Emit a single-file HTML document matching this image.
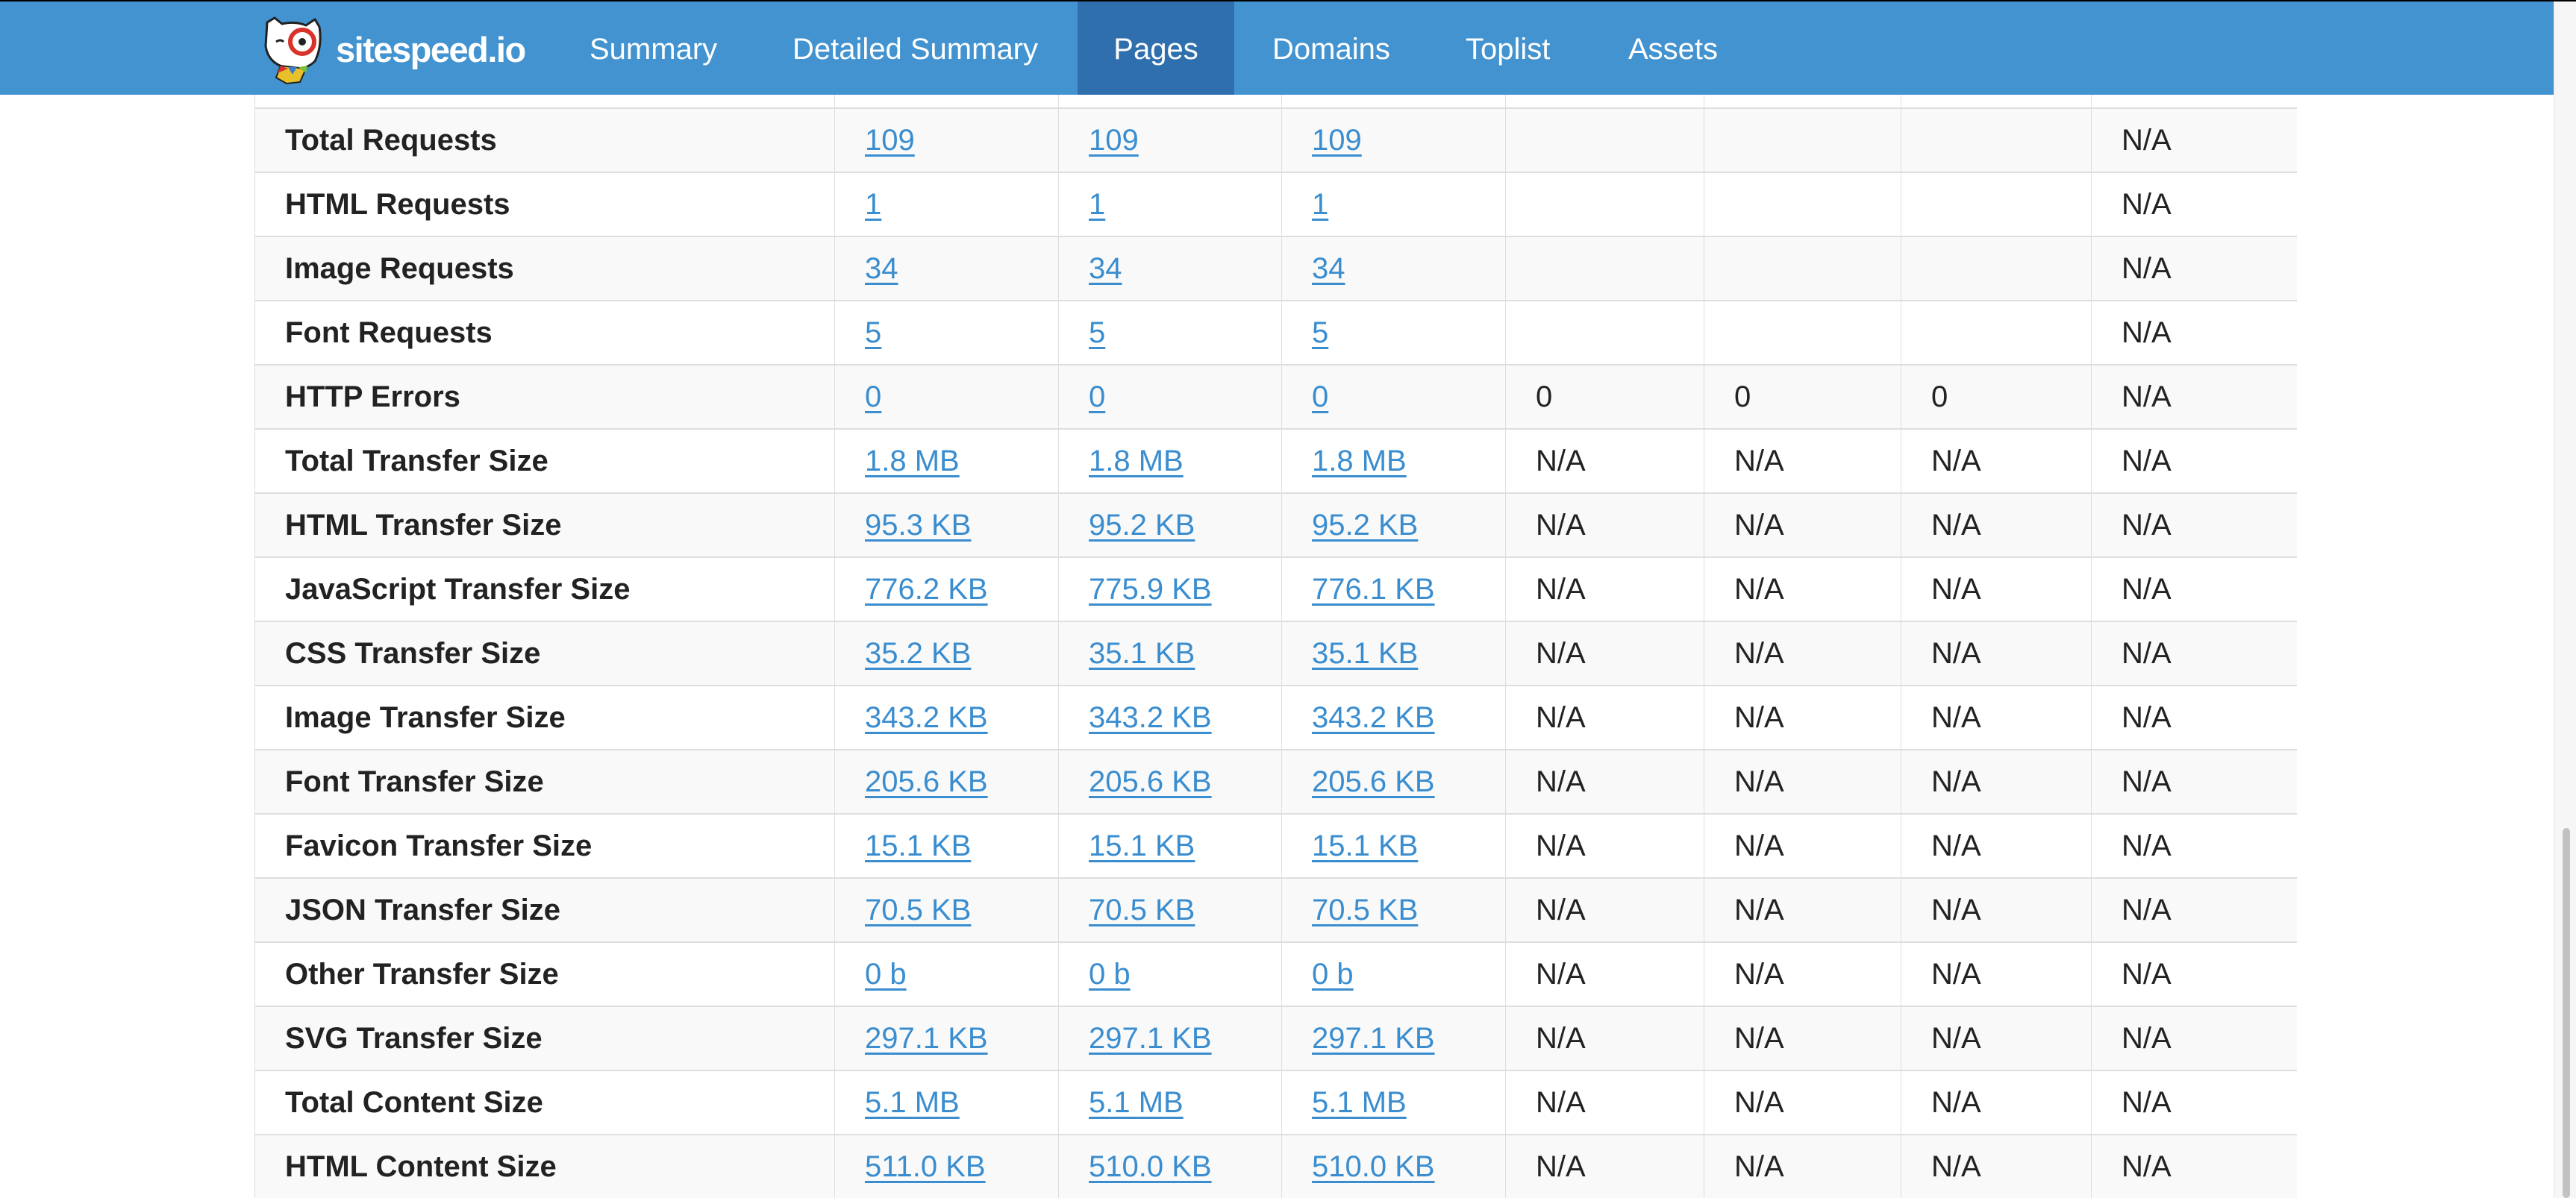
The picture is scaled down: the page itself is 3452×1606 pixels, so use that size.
<!DOCTYPE html>
<html><head><meta charset="utf-8"><style>
html,body{margin:0;padding:0;width:3452px;height:1606px;overflow:hidden;background:#fff;font-family:"Liberation Sans",Helvetica,Arial,sans-serif}
.top{position:absolute;left:0;top:0;width:3452px;height:2px;background:#000}
.hdr{position:absolute;left:0;top:2px;width:3422px;height:125px;background:#4293cf}
.nav{position:absolute;top:2px;height:125px;line-height:125px;color:#fff;font-size:40px}
.act{background:#2f6fad;top:0}
.sb{position:absolute;left:3422px;top:2px;width:30px;height:1604px;background:#f6f6f6;border-left:1px solid #e4e4e4}
.thumb{position:absolute;left:3434px;top:1110px;width:10px;height:496px;background:#c2c2c2;border-radius:5px}
.wrap{position:absolute;left:341px;top:127px;width:2737px;height:1479px;overflow:hidden}
table{border-collapse:collapse;margin-top:-69px;table-layout:fixed;width:2737px}
td{height:84px;border-top:2px solid #dedede;border-left:1px solid #dedede;border-right:1px solid #dedede;padding:0 0 0 40px;font-size:40px;color:#222;vertical-align:middle;white-space:nowrap}
td:first-child{font-weight:bold}
tr:nth-child(even) td{background:#f9f9f9}
a{color:#3a8dcf;text-decoration:underline;text-decoration-thickness:3px;text-underline-offset:6px}
</style></head><body>
<div class="top"></div>
<div class="hdr">
<svg style="position:absolute;left:350px;top:20px" width="90" height="92" viewBox="0 0 90 92">
<path d="M8 8 L18 2 L28 10 Q45 6 60 12 L72 4 L78 14 Q82 40 72 60 Q60 72 40 70 Q10 66 6 40 Z" fill="#fff" stroke="#222" stroke-width="3"/>
<circle cx="55" cy="34" r="16" fill="#fff" stroke="#d9322b" stroke-width="6"/>
<circle cx="55" cy="34" r="5" fill="#222"/>
<path d="M20 34 Q26 30 30 34" stroke="#222" stroke-width="3" fill="none"/>
<path d="M26 66 L20 82 L34 90 L52 88 L60 70 Z" fill="#e8c12a" stroke="#222" stroke-width="2"/>
<path d="M26 66 L22 76 L36 70 Z" fill="#d9322b"/>
<path d="M50 68 L60 76 L62 66 Z" fill="#7bbf3b"/>
<path d="M36 68 L48 68 L42 78 Z" fill="#3b7bd1"/>
</svg>
<div class="nav" style="left:450px;font-weight:bold;font-size:47px;letter-spacing:-1.5px">sitespeed.io</div>
<div class="nav" style="left:790px">Summary</div>
<div class="nav" style="left:1062px">Detailed Summary</div>
<div class="nav act" style="left:1444px;width:210px;text-align:center;line-height:129px">Pages</div>
<div class="nav" style="left:1705px">Domains</div>
<div class="nav" style="left:1964px">Toplist</div>
<div class="nav" style="left:2182px">Assets</div>
</div>
<div class="wrap"><table>
<colgroup><col style="width:777px"><col style="width:300px"><col style="width:299px"><col style="width:300px"><col style="width:266px"><col style="width:264px"><col style="width:255px"><col style="width:276px"></colgroup>
<tr><td></td><td></td><td></td><td></td><td></td><td></td><td></td><td></td></tr>
<tr><td>Total Requests</td><td><a>109</a></td><td><a>109</a></td><td><a>109</a></td><td></td><td></td><td></td><td>N/A</td></tr>
<tr><td>HTML Requests</td><td><a>1</a></td><td><a>1</a></td><td><a>1</a></td><td></td><td></td><td></td><td>N/A</td></tr>
<tr><td>Image Requests</td><td><a>34</a></td><td><a>34</a></td><td><a>34</a></td><td></td><td></td><td></td><td>N/A</td></tr>
<tr><td>Font Requests</td><td><a>5</a></td><td><a>5</a></td><td><a>5</a></td><td></td><td></td><td></td><td>N/A</td></tr>
<tr><td>HTTP Errors</td><td><a>0</a></td><td><a>0</a></td><td><a>0</a></td><td>0</td><td>0</td><td>0</td><td>N/A</td></tr>
<tr><td>Total Transfer Size</td><td><a>1.8 MB</a></td><td><a>1.8 MB</a></td><td><a>1.8 MB</a></td><td>N/A</td><td>N/A</td><td>N/A</td><td>N/A</td></tr>
<tr><td>HTML Transfer Size</td><td><a>95.3 KB</a></td><td><a>95.2 KB</a></td><td><a>95.2 KB</a></td><td>N/A</td><td>N/A</td><td>N/A</td><td>N/A</td></tr>
<tr><td>JavaScript Transfer Size</td><td><a>776.2 KB</a></td><td><a>775.9 KB</a></td><td><a>776.1 KB</a></td><td>N/A</td><td>N/A</td><td>N/A</td><td>N/A</td></tr>
<tr><td>CSS Transfer Size</td><td><a>35.2 KB</a></td><td><a>35.1 KB</a></td><td><a>35.1 KB</a></td><td>N/A</td><td>N/A</td><td>N/A</td><td>N/A</td></tr>
<tr><td>Image Transfer Size</td><td><a>343.2 KB</a></td><td><a>343.2 KB</a></td><td><a>343.2 KB</a></td><td>N/A</td><td>N/A</td><td>N/A</td><td>N/A</td></tr>
<tr><td>Font Transfer Size</td><td><a>205.6 KB</a></td><td><a>205.6 KB</a></td><td><a>205.6 KB</a></td><td>N/A</td><td>N/A</td><td>N/A</td><td>N/A</td></tr>
<tr><td>Favicon Transfer Size</td><td><a>15.1 KB</a></td><td><a>15.1 KB</a></td><td><a>15.1 KB</a></td><td>N/A</td><td>N/A</td><td>N/A</td><td>N/A</td></tr>
<tr><td>JSON Transfer Size</td><td><a>70.5 KB</a></td><td><a>70.5 KB</a></td><td><a>70.5 KB</a></td><td>N/A</td><td>N/A</td><td>N/A</td><td>N/A</td></tr>
<tr><td>Other Transfer Size</td><td><a>0 b</a></td><td><a>0 b</a></td><td><a>0 b</a></td><td>N/A</td><td>N/A</td><td>N/A</td><td>N/A</td></tr>
<tr><td>SVG Transfer Size</td><td><a>297.1 KB</a></td><td><a>297.1 KB</a></td><td><a>297.1 KB</a></td><td>N/A</td><td>N/A</td><td>N/A</td><td>N/A</td></tr>
<tr><td>Total Content Size</td><td><a>5.1 MB</a></td><td><a>5.1 MB</a></td><td><a>5.1 MB</a></td><td>N/A</td><td>N/A</td><td>N/A</td><td>N/A</td></tr>
<tr><td>HTML Content Size</td><td><a>511.0 KB</a></td><td><a>510.0 KB</a></td><td><a>510.0 KB</a></td><td>N/A</td><td>N/A</td><td>N/A</td><td>N/A</td></tr>
</table></div>
<div class="sb"></div><div class="thumb"></div>
</body></html>
